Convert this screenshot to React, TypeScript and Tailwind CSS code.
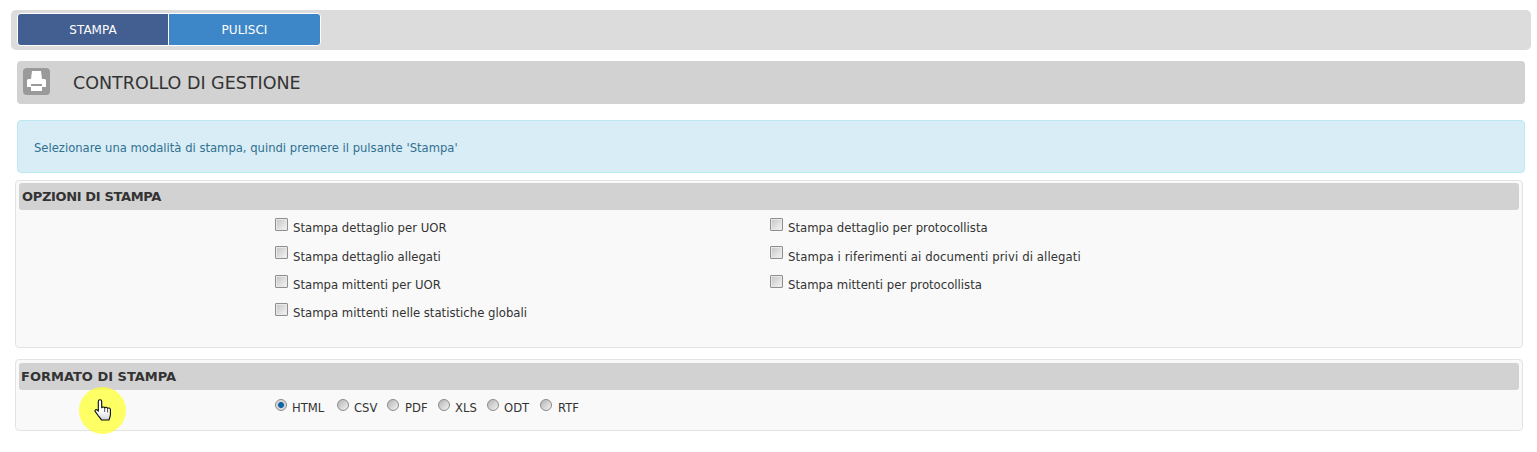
const font = "font-['DejaVu_Sans',sans-serif]";

function Check() {
  return (
    <span className="block w-[13px] h-[13px] border border-[#8f8f8f] bg-gradient-to-br from-[#c4c4c4] to-[#f6f6f6] shadow-[inset_0_0_0_1px_#e8e8e8] shrink-0 rounded-[1px]" />
  );
}

function CheckItem({ label, wide }: { label: string; wide?: boolean }) {
  return (
    <div className="flex items-start h-[28.3px] text-[11.7px] text-[#333] leading-[14px]">
      <span className="mt-[1px]"><Check /></span>
      <span className={`ml-[5px] mt-[4.4px] ${wide ? "tracking-[0.1px]" : ""}`}>{label}</span>
    </div>
  );
}

function Radio({ label, checked, width, labelGap }: { label: string; checked?: boolean; width: string; labelGap: string }) {
  return (
    <div className={`flex items-start ${width}`}>
      <span
        className={`block w-[12px] h-[12px] rounded-full border border-[#8a8a8a] shrink-0 ${
          checked
            ? "bg-[radial-gradient(circle,#0a6fb5_0%,#0a5f9e_35%,#d0d0d0_48%,#f0f0f0_100%)]"
            : "bg-gradient-to-br from-[#b4b4b4] to-[#f4f4f4]"
        }`}
      />
      <span className={`${labelGap} mt-[2px] text-[11.6px] leading-[14px] text-[#333]`}>{label}</span>
    </div>
  );
}

function PrinterIcon() {
  return (
    <svg width="27" height="27" viewBox="0 0 27 27" className="block">
      <rect width="27" height="27" rx="4" fill="#9a9a9a" />
      <path d="M9 3h9l1 8H8z" fill="#fff" />
      <path d="M5.500 11h16a1.500 1.500 0 0 1 1.500 1.500V19h-4v-3H8v3H4v-6.500A1.500 1.500 0 0 1 5.500 11z" fill="#fff" />
      <path d="M8 18h11v5H8z" fill="#fff" />
    </svg>
  );
}

function Hand() {
  return (
    <svg width="18" height="23" viewBox="0 0 18 23" className="block">
      <defs>
        <linearGradient id="palm" x1="0" y1="0" x2="0" y2="1">
          <stop offset="0.55" stopColor="#fff" />
          <stop offset="1" stopColor="#cfd3da" />
        </linearGradient>
      </defs>
      <path
        d="M6 .8c1 0 1.700.7 1.700 1.700v6.200c.5-1 2.600-1 3 .2.600-.9 2.500-.8 2.900.5.600-.7 2.700-.5 2.800 1.100v5c0 2-.8 3.500-1.500 5.500H7.500c-.7-1.500-2-2.800-3.200-4.200L1.300 12.600c-.9-1.300.8-2.600 1.900-1.600l1.100 1.200V2.500C4.300 1.500 5 .8 6 .8z"
        fill="url(#palm)"
        stroke="#0a0a0a"
        strokeWidth="1.100"
        strokeLinejoin="round"
      />
      <path d="M10.700 9v4M13.600 9.500v4" stroke="#222" strokeWidth=".8" fill="none" />
    </svg>
  );
}

export default function App() {
  return (
    <div className={`${font} bg-white w-[1537px] h-[452px] overflow-hidden relative pt-[10px]`}>
      <div className="ml-[11px] w-[1520px] h-[40px] bg-[#dcdcdc] rounded-[5px] pt-[3px] pl-[6px]">
        <div className="flex w-[304px] h-[33px] border border-white rounded-[4px] overflow-hidden text-[12px] text-white">
          <div className="w-[151px] bg-[#435f91] flex items-center justify-center border-r border-white">STAMPA</div>
          <div className="flex-1 bg-[#3d87c8] flex items-center justify-center">PULISCI</div>
        </div>
      </div>

      <div className="ml-[17px] mt-[11px] w-[1508px] h-[43px] bg-[#d2d2d2] rounded-[4px] flex items-start pl-[6px] pt-[7px]">
        <PrinterIcon />
        <span className="ml-[23px] mt-[5px] text-[17.5px] leading-[21px] text-[#333]">CONTROLLO DI GESTIONE</span>
      </div>

      <div className="ml-[17px] mt-[16px] w-[1508px] h-[53px] bg-[#d9edf7] border border-[#bce8f1] rounded-[4px] pl-[16px] pt-[5px] flex items-center text-[11.6px] text-[#31708f]">
        Selezionare una modalità di stampa, quindi premere il pulsante 'Stampa'
      </div>

      <div className="ml-[15px] mt-[7px] w-[1508px] h-[168px] bg-[#f9f9f9] border border-[#e3e3e3] rounded-[4px] pt-[2px] px-[3px]">
        <div className="h-[27px] bg-[#d2d2d2] rounded-[3px] pl-[3px] pt-[1px] flex items-center font-bold text-[13px] tracking-[-0.35px] text-[#333]">OPZIONI DI STAMPA</div>
        <div className="flex ml-[256px] mt-[7px]">
          <div className="w-[495px]">
            <CheckItem label="Stampa dettaglio per UOR" />
            <CheckItem label="Stampa dettaglio allegati" />
            <CheckItem label="Stampa mittenti per UOR" />
            <CheckItem label="Stampa mittenti nelle statistiche globali" />
          </div>
          <div>
            <CheckItem label="Stampa dettaglio per protocollista" />
            <CheckItem label="Stampa i riferimenti ai documenti privi di allegati" wide />
            <CheckItem label="Stampa mittenti per protocollista" />
          </div>
        </div>
      </div>

      <div className="ml-[15px] mt-[11px] w-[1508px] h-[72px] bg-[#f9f9f9] border border-[#e3e3e3] rounded-[4px] pt-[3px] px-[3px]">
        <div className="h-[27px] bg-[#d2d2d2] rounded-[3px] pl-[2px] pt-[1px] flex items-center font-bold text-[13px] tracking-[0px] text-[#333]">FORMATO DI STAMPA</div>
        <div className="flex ml-[256px] mt-[9px]">
          <Radio label="HTML" checked width="w-[62px]" labelGap="ml-[5px]" />
          <Radio label="CSV" width="w-[50px]" labelGap="ml-[5px]" />
          <Radio label="PDF" width="w-[51px]" labelGap="ml-[6px]" />
          <Radio label="XLS" width="w-[49px]" labelGap="ml-[5px]" />
          <Radio label="ODT" width="w-[53px]" labelGap="ml-[5px]" />
          <Radio label="RTF" width="w-[50px]" labelGap="ml-[6px]" />
        </div>
      </div>

      <div className="absolute left-[79px] top-[387px] w-[47px] h-[47px] rounded-full bg-[#ffff33]/75 flex items-center justify-center">
        <Hand />
      </div>
    </div>
  );
}
